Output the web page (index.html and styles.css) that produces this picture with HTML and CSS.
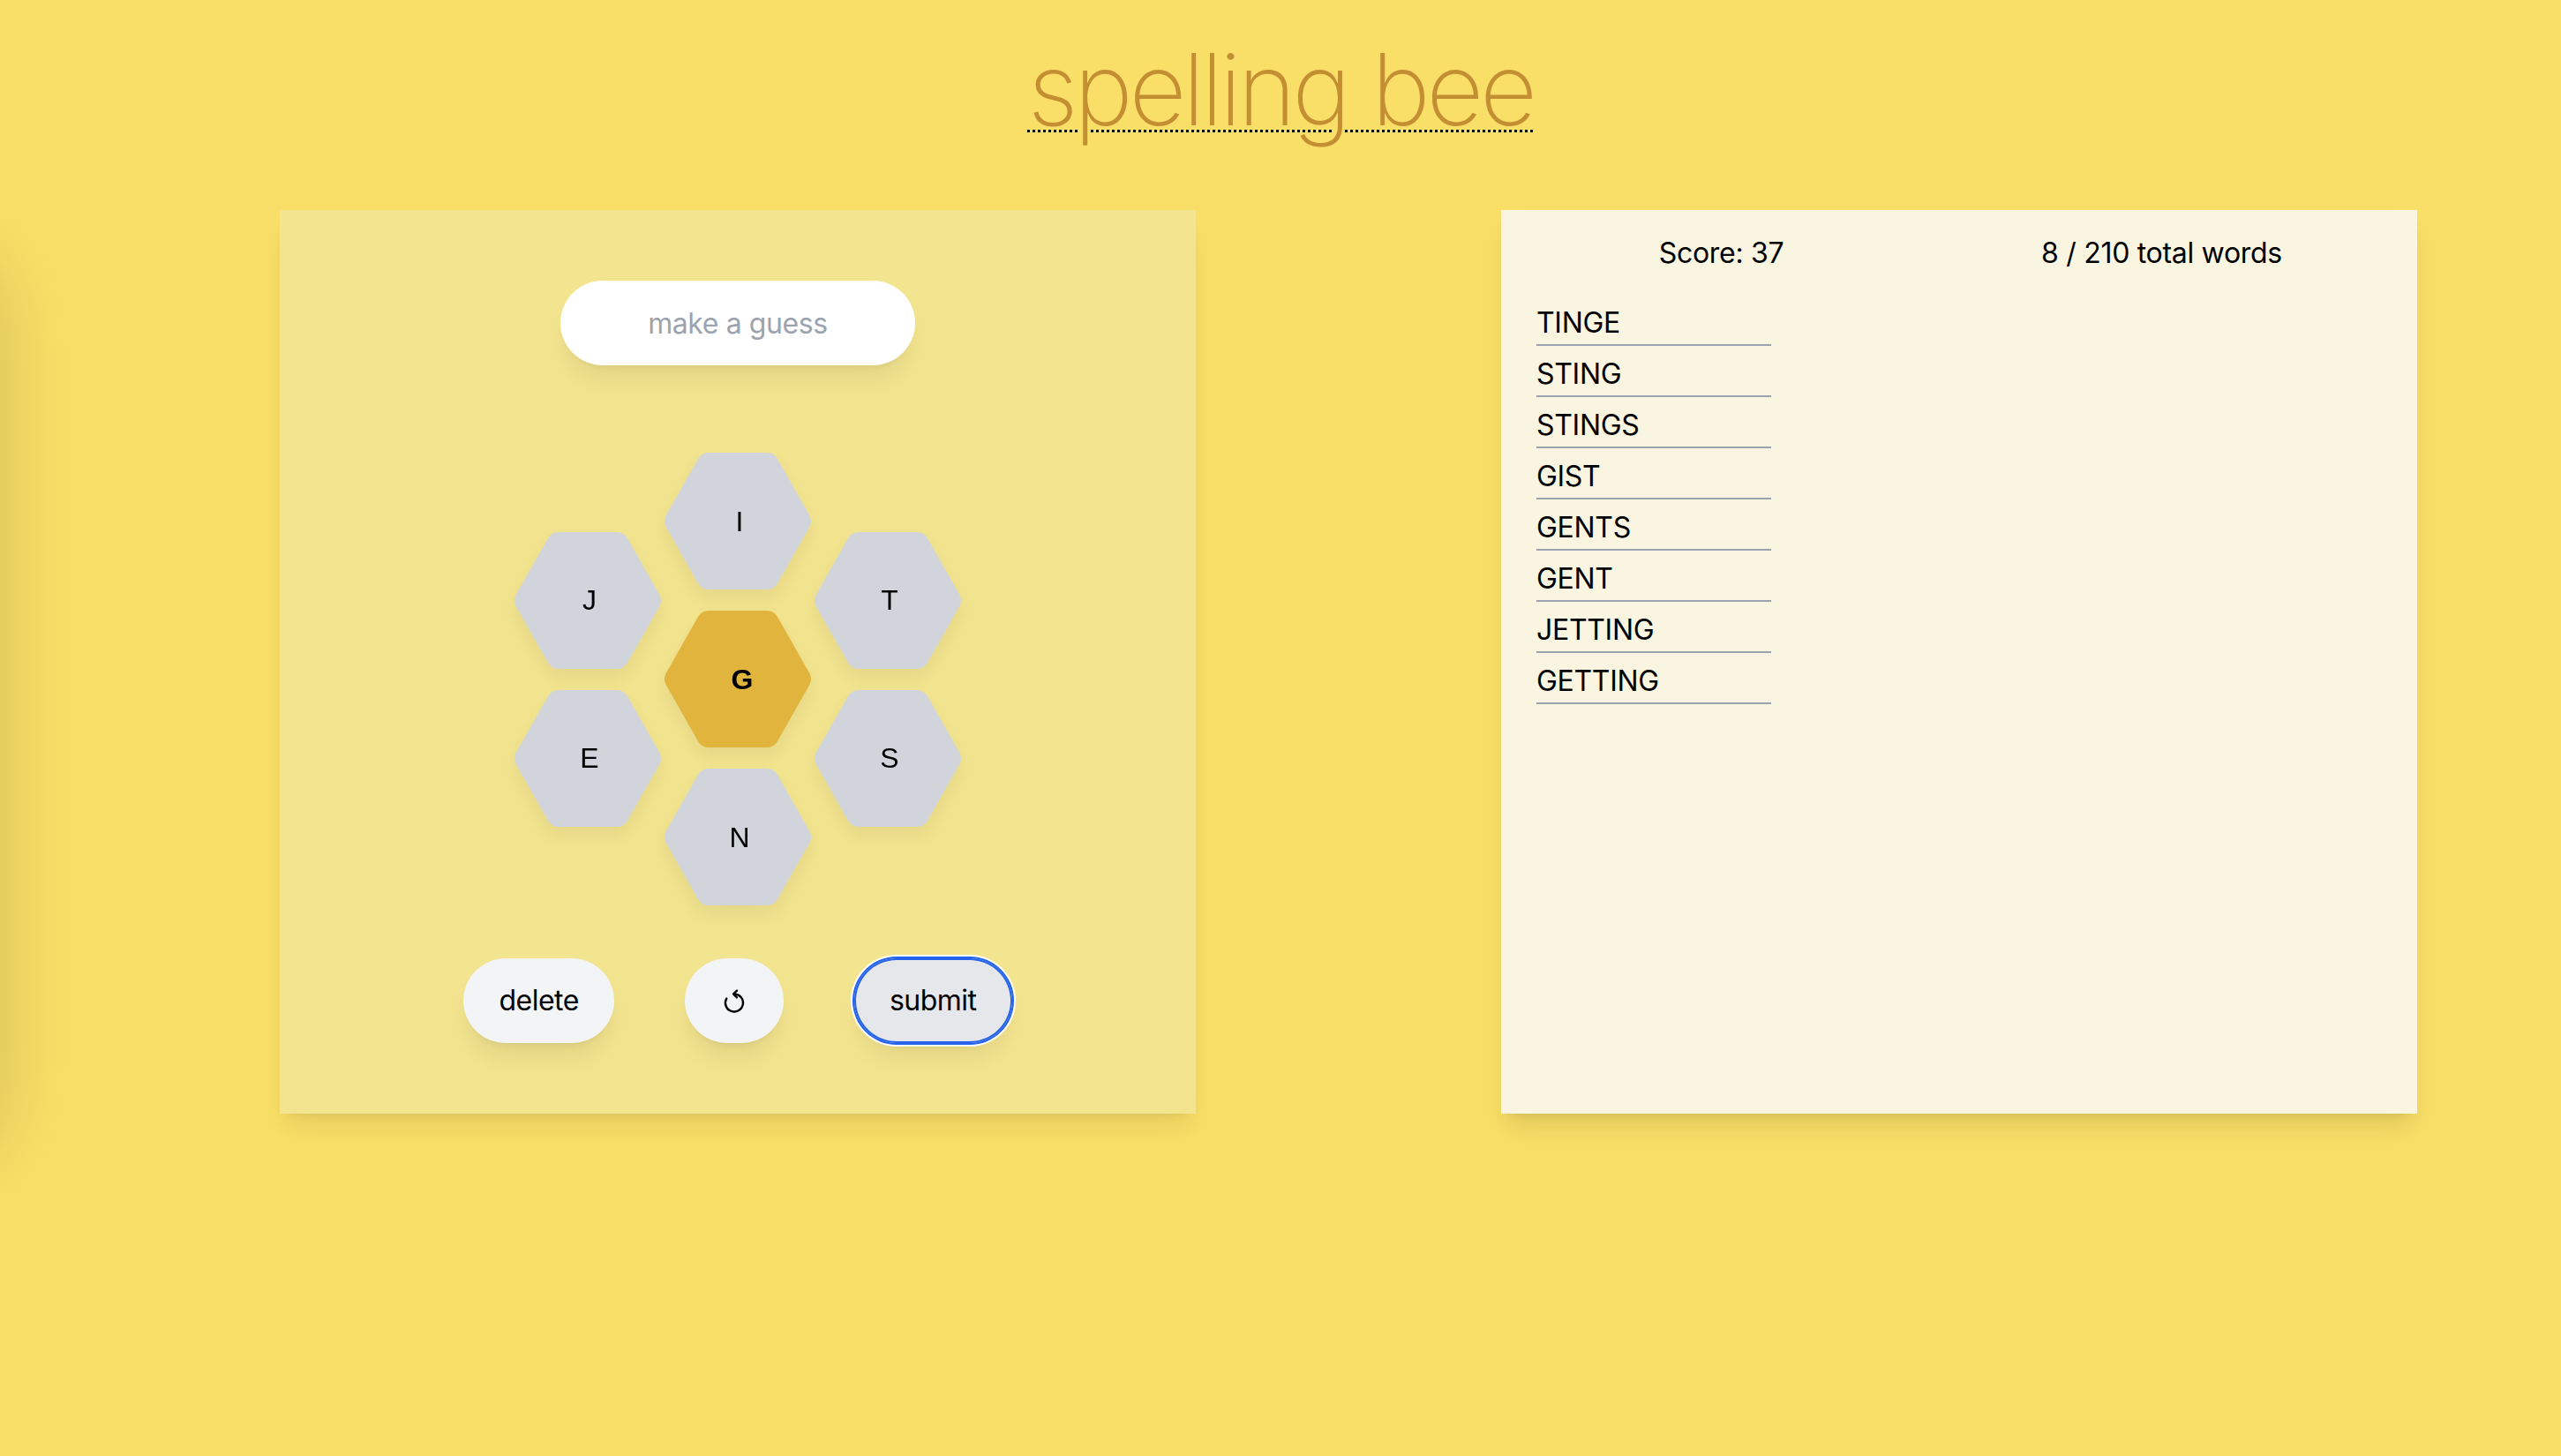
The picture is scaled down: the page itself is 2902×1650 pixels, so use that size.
FILE: index.html
```html
<!DOCTYPE html>
<html lang="en">
<head>
<meta charset="utf-8">
<title>spelling bee</title>
<link rel="stylesheet" href="styles.css">
</head>
<body>
<div class="drawer"></div>
<header class="top">
  <h1 class="title"><abbr class="title-abbr" title="spelling bee"><span class="title-text">spelling bee</span></abbr></h1>
</header>
<main class="board">
  <section class="play">
    <input class="guess" type="text" placeholder="make a guess">
    <div class="hive">
      <div class="hive-col">
        <div class="hex"><svg class="hex-shape" viewBox="0 0 170 155"><polygon points="16.1,77.5 52.15,14 117.85,14 153.9,77.5 117.85,141 52.15,141"/></svg><span class="hex-letter">J</span></div>
        <div class="hex"><svg class="hex-shape" viewBox="0 0 170 155"><polygon points="16.1,77.5 52.15,14 117.85,14 153.9,77.5 117.85,141 52.15,141"/></svg><span class="hex-letter">E</span></div>
      </div>
      <div class="hive-col">
        <div class="hex"><svg class="hex-shape" viewBox="0 0 170 155"><polygon points="16.1,77.5 52.15,14 117.85,14 153.9,77.5 117.85,141 52.15,141"/></svg><span class="hex-letter">I</span></div>
        <div class="hex hex-center"><svg class="hex-shape" viewBox="0 0 170 155"><polygon points="16.1,77.5 52.15,14 117.85,14 153.9,77.5 117.85,141 52.15,141"/></svg><span class="hex-letter">G</span></div>
        <div class="hex"><svg class="hex-shape" viewBox="0 0 170 155"><polygon points="16.1,77.5 52.15,14 117.85,14 153.9,77.5 117.85,141 52.15,141"/></svg><span class="hex-letter">N</span></div>
      </div>
      <div class="hive-col">
        <div class="hex"><svg class="hex-shape" viewBox="0 0 170 155"><polygon points="16.1,77.5 52.15,14 117.85,14 153.9,77.5 117.85,141 52.15,141"/></svg><span class="hex-letter">T</span></div>
        <div class="hex"><svg class="hex-shape" viewBox="0 0 170 155"><polygon points="16.1,77.5 52.15,14 117.85,14 153.9,77.5 117.85,141 52.15,141"/></svg><span class="hex-letter">S</span></div>
      </div>
    </div>
    <div class="controls">
      <button class="btn" type="button">delete</button>
      <button class="btn btn-icon" type="button" aria-label="shuffle"><svg class="reset-icon" viewBox="0 0 32 32"><path d="M7.3 13.5 A10 10 0 1 0 15.5 8.5"/><path d="M19 4.6 L15 8.5 L19 12.4"/></svg></button>
      <button class="btn btn-submit" type="button">submit</button>
    </div>
  </section>
  <section class="found">
    <div class="stats">
      <span>Score: 37</span>
      <span>8 / 210 total words</span>
    </div>
    <ul class="words">
      <li>TINGE</li>
      <li>STING</li>
      <li>STINGS</li>
      <li>GIST</li>
      <li>GENTS</li>
      <li>GENT</li>
      <li>JETTING</li>
      <li>GETTING</li>
    </ul>
  </section>
</main>
</body>
</html>
```

FILE: styles.css
```css
* {
  box-sizing: border-box;
}

html,
body {
  margin: 0;
  padding: 0;
}

body {
  position: relative;
  width: 2902px;
  height: 1650px;
  overflow: hidden;
  background: #f9df67;
  color: #000;
  font-family: Inter, "Noto Sans", sans-serif;
}

.drawer {
  position: absolute;
  left: -1038px;
  top: 238px;
  width: 1038px;
  height: 1024px;
  background: #f3e48f;
  box-shadow: 0 50px 100px -24px rgba(0, 0, 0, 0.25);
}

.top {
  height: 238px;
  padding-top: 45px;
  text-align: center;
}

.title {
  margin: 0;
  font-family: Inter, "Noto Sans", sans-serif;
  font-size: 113px;
  line-height: 1;
  font-weight: 150;
  letter-spacing: -4.5px;
}

.title-abbr {
  color: #000;
  text-decoration: underline dotted #000;
  text-decoration-thickness: 3px;
  text-underline-offset: 5px;
}

.title-text {
  color: #c48f33;
}

.board {
  display: flex;
  align-items: flex-start;
  gap: 346px;
  padding-left: 317px;
}

.play {
  width: 1038px;
  height: 1024px;
  background: #f3e48f;
  box-shadow: 0 20px 30px -6px rgba(0, 0, 0, 0.08), 0 8px 12px -8px rgba(0, 0, 0, 0.08);
  display: flex;
  flex-direction: column;
  align-items: center;
  padding-top: 80px;
}

.guess {
  width: 402px;
  height: 96px;
  border: none;
  border-radius: 48px;
  background: #fff;
  text-align: center;
  font-family: Inter, "Noto Sans", sans-serif;
  font-size: 32px;
  letter-spacing: -0.4px;
  color: #000;
  outline: none;
  box-shadow: 0 20px 30px -6px rgba(0, 0, 0, 0.07), 0 8px 12px -8px rgba(0, 0, 0, 0.07);
}

.guess::placeholder {
  color: #9ca3af;
}

.hive {
  margin-top: 99px;
  display: flex;
  align-items: center;
}

.hive-col {
  display: flex;
  flex-direction: column;
  gap: 24px;
}

.hex {
  width: 170px;
  height: 155px;
  display: grid;
  place-items: center;
  filter: drop-shadow(0 10px 10px rgba(0, 0, 0, 0.06));
}

.hex > * {
  grid-area: 1 / 1;
}

.hex-shape {
  display: block;
  width: 170px;
  height: 155px;
}

.hex-shape polygon {
  fill: #d1d5db;
  stroke: #d1d5db;
  stroke-width: 28;
  stroke-linejoin: round;
}

.hex-center .hex-shape polygon {
  fill: #e1b43e;
  stroke: #e1b43e;
}

.hex-letter {
  font-family: "Liberation Sans", Arial, sans-serif;
  font-size: 32px;
  line-height: 1;
  padding-left: 4px;
}

.hex-center .hex-letter {
  font-weight: 700;
  padding-left: 10px;
}

.controls {
  margin-top: 60px;
  display: flex;
  gap: 80px;
}

.btn {
  height: 96px;
  padding: 0 40px;
  border: none;
  border-radius: 48px;
  background: #f3f4f6;
  color: #000;
  font-family: Inter, "Noto Sans", sans-serif;
  font-size: 32px;
  letter-spacing: -0.5px;
  line-height: 48px;
  box-shadow: 0 20px 30px -6px rgba(0, 0, 0, 0.08), 0 8px 12px -8px rgba(0, 0, 0, 0.08);
}

.btn-icon {
  display: flex;
  align-items: center;
  justify-content: center;
}

.reset-icon {
  width: 32px;
  height: 32px;
  fill: none;
  stroke: #000;
  stroke-width: 2.4;
  stroke-linecap: round;
  stroke-linejoin: round;
}

.btn-submit {
  background: #e5e7eb;
  box-shadow: inset 0 0 0 2px #2563eb, 0 0 0 2px #2563eb, 0 0 0 4px #fff, 0 20px 30px -6px rgba(0, 0, 0, 0.08), 0 8px 12px -8px rgba(0, 0, 0, 0.08);
}

.found {
  width: 1038px;
  height: 1024px;
  background: #faf5e0;
  box-shadow: 0 20px 30px -6px rgba(0, 0, 0, 0.1), 0 8px 12px -8px rgba(0, 0, 0, 0.1);
  padding: 25px 40px 0 40px;
}

.stats {
  display: grid;
  grid-template-columns: 1fr 1fr;
  margin-left: -40px;
  text-align: center;
  font-size: 32px;
  letter-spacing: -0.3px;
  line-height: 48px;
}

.words {
  list-style: none;
  margin: 23px 0 0;
  padding: 0;
}

.words li {
  width: 266px;
  padding-top: 8px;
  font-size: 32px;
  letter-spacing: -0.3px;
  line-height: 48px;
  border-bottom: 2px solid #9ca3af;
}
```
